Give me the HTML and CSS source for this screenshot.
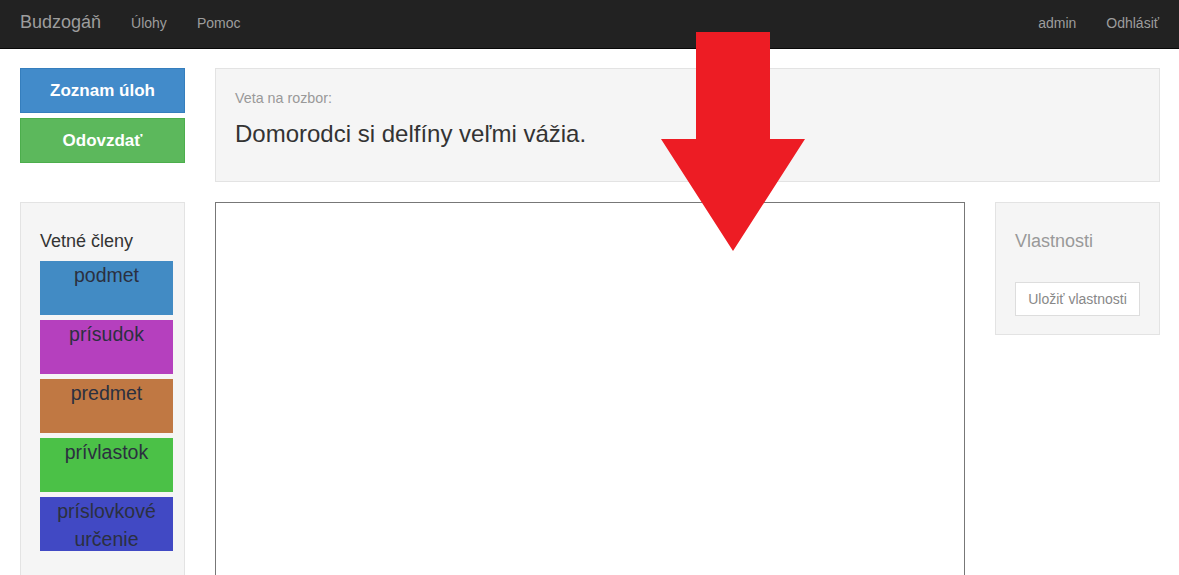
FILE: index.html
```html
<!DOCTYPE html>
<html lang="sk">
<head>
<meta charset="utf-8">
<title>Budzogáň</title>
<link rel="stylesheet" href="styles.css">
</head>
<body>
<nav class="navbar">
  <div class="nav-left">
    <span class="brand">Budzogáň</span>
    <a class="nav-link">Úlohy</a>
    <a class="nav-link">Pomoc</a>
  </div>
  <div class="nav-right">
    <a class="nav-link">admin</a>
    <a class="nav-link">Odhlásiť</a>
  </div>
</nav>
<main class="page">
  <div class="row top-row">
    <div class="side">
      <button class="btn btn-blue">Zoznam úloh</button>
      <button class="btn btn-green">Odovzdať</button>
    </div>
    <div class="well sentence">
      <div class="label">Veta na rozbor:</div>
      <div class="text">Domorodci si delfíny veľmi vážia.</div>
    </div>
  </div>
  <div class="row bottom-row">
    <div class="well members">
      <div class="members-title">Vetné členy</div>
      <div class="member m-podmet">podmet</div>
      <div class="member m-prisudok">prísudok</div>
      <div class="member m-predmet">predmet</div>
      <div class="member m-privlastok">prívlastok</div>
      <div class="member m-prislovkove">príslovkové určenie</div>
    </div>
    <div class="canvas"></div>
    <div class="well props">
      <div class="props-title">Vlastnosti</div>
      <button class="btn-save">Uložiť vlastnosti</button>
    </div>
  </div>
</main>
<svg class="arrow" width="146" height="222" viewBox="0 0 146 222">
  <polygon points="35,0 109,0 109,107 144,107 72,219 0,107 35,107" fill="#ed1c24"/>
</svg>
</body>
</html>
```
FILE: styles.css
```css
html, body {
  margin: 0;
  padding: 0;
  background: #fff;
  font-family: "Liberation Sans", Arial, sans-serif;
  color: #333;
  overflow: hidden;
  height: 575px;
}
.navbar {
  height: 49px;
  background: #222;
  border-bottom: 1px solid #080808;
  display: flex;
  justify-content: space-between;
  align-items: center;
  padding: 0 20px 3px 20px;
  box-sizing: border-box;
}
.nav-left, .nav-right {
  display: flex;
  align-items: center;
}
.brand {
  font-size: 18px;
  color: #9d9d9d;
  margin-right: 30px;
}
.nav-left .nav-link {
  margin-right: 30px;
}
.nav-right .nav-link {
  margin-left: 30px;
}
.nav-link {
  font-size: 14px;
  color: #9d9d9d;
}
.page {
  padding: 19px 19px 0 20px;
}
.row {
  display: flex;
  gap: 30px;
}
.side {
  width: 165px;
  display: flex;
  flex-direction: column;
  gap: 5px;
  flex-shrink: 0;
}
.btn {
  height: 45px;
  border: 1px solid transparent;
  color: #fff;
  font-family: "Liberation Sans", Arial, sans-serif;
  font-weight: bold;
  font-size: 17px;
  padding: 0;
  box-sizing: border-box;
}
.btn-blue {
  background: #428bca;
  border-color: #357ebd;
}
.btn-green {
  background: #5cb85c;
  border-color: #4cae4c;
}
.well {
  background: #f5f5f5;
  border: 1px solid #e3e3e3;
  box-sizing: border-box;
}
.sentence {
  flex: 1;
  height: 114px;
  padding: 21px 19px 0 19px;
}
.sentence .label {
  font-size: 14.3px;
  color: #999;
  line-height: 16px;
}
.sentence .text {
  font-size: 24px;
  line-height: 28px;
  margin-top: 14px;
  color: #333;
}
.bottom-row {
  margin-top: 20px;
  gap: 30px;
}
.members {
  width: 165px;
  flex-shrink: 0;
  height: 400px;
  padding: 26px 11px 0 19px;
}
.members-title {
  font-size: 18px;
  line-height: 24px;
  margin-bottom: 8px;
}
.member {
  height: 54px;
  margin-bottom: 5px;
  text-align: center;
  font-size: 19.5px;
  line-height: 28px;
  color: #2b3040;
  padding-top: 0;
  box-sizing: border-box;
}
.m-podmet { background: #428bc4; }
.m-prisudok { background: #b540be; }
.m-predmet { background: #c07843; }
.m-privlastok { background: #4bc147; }
.m-prislovkove { background: #4149c4; }
.canvas {
  width: 750px;
  height: 400px;
  border: 1px solid #777;
  box-sizing: border-box;
  background: #fff;
  flex-shrink: 0;
}
.props {
  width: 165px;
  flex-shrink: 0;
  height: 133px;
  padding: 27px 19px 0 19px;
}
.props-title {
  font-size: 18px;
  color: #999;
  line-height: 22px;
}
.btn-save {
  margin-top: 30px;
  height: 34px;
  width: 125px;
  background: #fff;
  border: 1px solid #ddd;
  color: #888;
  font-family: "Liberation Sans", Arial, sans-serif;
  font-size: 14px;
  padding: 0;
}
.arrow {
  position: absolute;
  left: 661px;
  top: 32px;
}
```
